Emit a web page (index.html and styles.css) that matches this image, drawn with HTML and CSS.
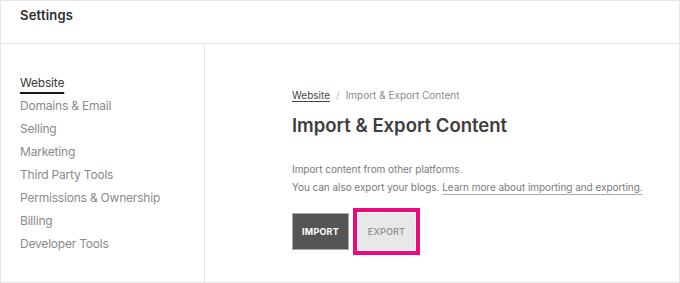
FILE: index.html
```html
<!DOCTYPE html>
<html lang="en">
<head>
<meta charset="utf-8">
<title>Settings</title>
<link rel="stylesheet" href="styles.css">
</head>
<body>
<div class="panel">
  <header class="header">Settings</header>
  <div class="body">
    <nav class="sidebar">
      <a class="nav-item active"><span>Website</span></a>
      <a class="nav-item">Domains &amp; Email</a>
      <a class="nav-item">Selling</a>
      <a class="nav-item">Marketing</a>
      <a class="nav-item">Third Party Tools</a>
      <a class="nav-item">Permissions &amp; Ownership</a>
      <a class="nav-item">Billing</a>
      <a class="nav-item">Developer Tools</a>
    </nav>
    <main class="main">
      <div class="crumbs"><a class="crumb-link">Website</a><span class="crumb-sep">/</span><span class="crumb-current">Import &amp; Export Content</span></div>
      <h1 class="title">Import &amp; Export Content</h1>
      <p class="desc">Import content from other platforms.<br>You can also export your blogs. <a class="desc-link">Learn more about importing and exporting.</a></p>
      <div class="actions">
        <button class="btn btn-dark">IMPORT</button>
        <button class="btn btn-light">EXPORT</button>
      </div>
    </main>
  </div>
</div>
</body>
</html>
```

FILE: styles.css
```css
* { box-sizing: border-box; }
html, body { margin: 0; padding: 0; background: #fff; }
body { font-family: Inter, "Noto Sans", sans-serif; }

.panel {
  width: 680px;
  height: 283px;
  border: 1px solid #e6e6e6;
  display: flex;
  flex-direction: column;
}

.header {
  height: 43px;
  border-bottom: 1px solid #e6e6e6;
  padding: 6px 0 0 19px;
  font-size: 13px;
  font-weight: 600;
  letter-spacing: 0.2px;
  color: #2b2b2b;
  line-height: 16px;
}

.body {
  flex: 1;
  display: flex;
}

.sidebar {
  width: 204px;
  border-right: 1px solid #e6e6e6;
  padding: 27px 0 0 19px;
  display: flex;
  flex-direction: column;
}

.nav-item {
  font-size: 12px;
  letter-spacing: -0.2px;
  line-height: 23px;
  color: #8a8a8a;
  white-space: nowrap;
}

.nav-item.active span {
  color: #3a3a3a;
  text-decoration: underline;
  text-decoration-thickness: 2px;
  text-underline-offset: 5px;
  text-decoration-color: #1a1a1a;
}

.main {
  flex: 1;
  padding: 44px 0 0 87px;
}

.crumbs {
  font-size: 10px;
  line-height: 14px;
  color: #8a8a8a;
}

.crumb-link {
  color: #444;
  text-decoration: underline;
  text-underline-offset: 2px;
}

.crumb-sep {
  color: #c4c4c4;
  margin: 0 6px;
}

.title {
  margin: 11px 0 0;
  font-size: 18.5px;
  line-height: 24px;
  font-weight: 600;
  color: #3d3d3d;
}

.desc {
  margin: 23px 0 0;
  font-size: 10px;
  letter-spacing: -0.05px;
  line-height: 18px;
  color: #7a7a7a;
}

.desc-link {
  color: #7a7a7a;
  text-decoration: underline;
  text-decoration-color: #aaa;
  text-underline-offset: 3px;
}

.actions {
  margin-top: 17px;
  display: flex;
  gap: 9px;
}

.btn {
  width: 57px;
  height: 37px;
  font-family: Inter, "Noto Sans", sans-serif;
  font-size: 9px;
  letter-spacing: 0.2px;
  padding: 0;
  cursor: pointer;
}

.btn-dark {
  background: #555;
  border: 1px solid #aaa;
  color: #fff;
  font-weight: 700;
}

.btn-light {
  background: #e8e8e8;
  border: none;
  color: #8a8a8a;
  font-weight: 500;
  outline: 4px solid #ec0a82;
  outline-offset: 1px;
}
```
